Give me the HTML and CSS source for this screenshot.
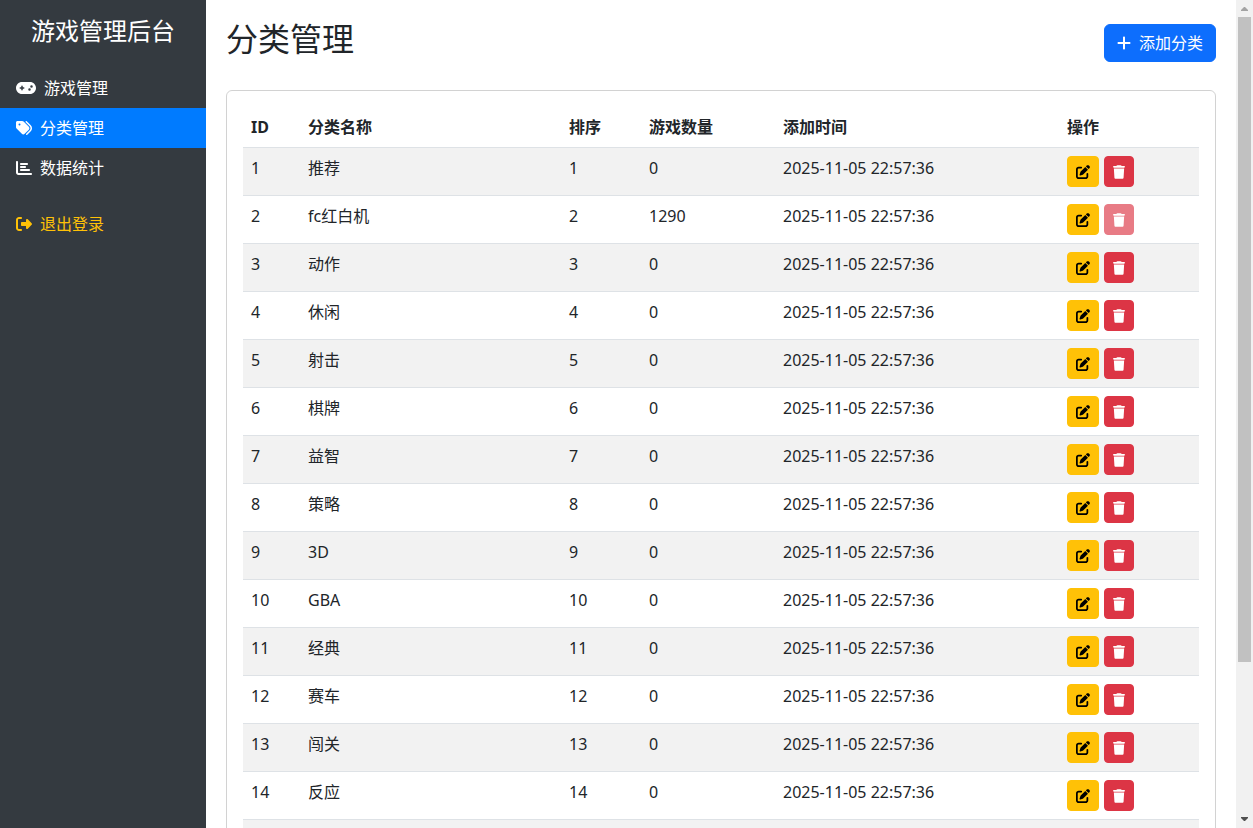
FILE: index.html
```html
<!DOCTYPE html>
<html lang="zh-CN">
<head>
    <meta charset="UTF-8">
    <meta name="viewport" content="width=device-width, initial-scale=1.0">
    <title>分类管理 - 游戏管理后台</title>
    <link rel="stylesheet" href="styles.css">
</head>
<body>
    <svg class="icon-defs" aria-hidden="true">
        <symbol id="icon-gamepad" viewBox="0 0 640 512">
            <path d="M192 64C86 64 0 150 0 256S86 448 192 448H448c106 0 192-86 192-192s-86-192-192-192H192zM496 168a40 40 0 1 1 0 80 40 40 0 1 1 0-80zM392 304a40 40 0 1 1 80 0 40 40 0 1 1 -80 0zM168 200c0-13.3 10.7-24 24-24s24 10.7 24 24v32h32c13.3 0 24 10.7 24 24s-10.7 24-24 24H216v32c0 13.3-10.7 24-24 24s-24-10.7-24-24V280H136c-13.3 0-24-10.7-24-24s10.7-24 24-24h32V200z"/>
        </symbol>
        <symbol id="icon-tags" viewBox="0 0 512 512">
            <path d="M345 39.1L472.8 168.4c52.4 53 52.4 138.2 0 191.2L360.8 472.9c-9.3 9.4-24.5 9.5-33.9 .2s-9.5-24.5-.2-33.9L438.6 325.9c33.9-34.3 33.9-89.4 0-123.7L310.9 72.9c-9.3-9.4-9.2-24.6 .2-33.9s24.6-9.2 33.9 .2zM0 229.5V80C0 53.5 21.5 32 48 32H197.5c17 0 33.3 6.7 45.3 18.7l168 168c25 25 25 65.5 0 90.5L277.3 442.7c-25 25-65.5 25-90.5 0l-168-168C6.7 262.7 0 246.5 0 229.5zM144 144a32 32 0 1 0 -64 0 32 32 0 1 0 64 0z"/>
        </symbol>
        <symbol id="icon-chart" viewBox="0 0 512 512">
            <path d="M32 32c17.7 0 32 14.3 32 32V400c0 8.8 7.2 16 16 16H480c17.7 0 32 14.3 32 32s-14.3 32-32 32H80c-44.2 0-80-35.8-80-80V64C0 46.3 14.3 32 32 32zm96 96c0-17.7 14.3-32 32-32l192 0c17.7 0 32 14.3 32 32s-14.3 32-32 32H160c-17.7 0-32-14.3-32-32zm32 64H288c17.7 0 32 14.3 32 32s-14.3 32-32 32H160c-17.7 0-32-14.3-32-32s14.3-32 32-32zm0 96H416c17.7 0 32 14.3 32 32s-14.3 32-32 32H160c-17.7 0-32-14.3-32-32s14.3-32 32-32z"/>
        </symbol>
        <symbol id="icon-logout" viewBox="0 0 512 512">
            <path d="M377.9 105.9L500.7 228.7c7.2 7.2 11.3 17.1 11.3 27.3s-4.1 20.1-11.3 27.3L377.9 406.1c-6.4 6.4-15 9.9-24 9.9c-18.7 0-33.9-15.2-33.9-33.9l0-62.1-128 0c-17.7 0-32-14.3-32-32l0-64c0-17.7 14.3-32 32-32l128 0 0-62.1c0-18.7 15.2-33.9 33.9-33.9c9 0 17.6 3.6 24 9.9zM160 96L96 96c-17.7 0-32 14.3-32 32l0 256c0 17.7 14.3 32 32 32l64 0c17.7 0 32 14.3 32 32s-14.3 32-32 32l-64 0c-53 0-96-43-96-96L0 128C0 75 43 32 96 32l64 0c17.7 0 32 14.3 32 32s-14.3 32-32 32z"/>
        </symbol>
        <symbol id="icon-plus" viewBox="0 0 448 512">
            <path d="M256 80c0-17.7-14.3-32-32-32s-32 14.3-32 32V224H48c-17.7 0-32 14.3-32 32s14.3 32 32 32H192V432c0 17.7 14.3 32 32 32s32-14.3 32-32V288H400c17.7 0 32-14.3 32-32s-14.3-32-32-32H256V80z"/>
        </symbol>
        <symbol id="icon-edit" viewBox="0 0 512 512">
            <path d="M471.6 21.7c-21.9-21.9-57.3-21.9-79.2 0L362.3 51.7l97.9 97.9 30.1-30.1c21.9-21.9 21.9-57.3 0-79.2L471.6 21.7zm-299.2 220c-6.1 6.1-10.8 13.6-13.5 21.9l-29.6 88.8c-2.9 8.6-.6 18.1 5.8 24.6s15.9 8.7 24.6 5.8l88.8-29.6c8.2-2.7 15.7-7.4 21.9-13.5L437.7 172.3 339.7 74.3 172.4 241.7zM96 64C43 64 0 107 0 160V416c0 53 43 96 96 96H352c53 0 96-43 96-96V320c0-17.7-14.3-32-32-32s-32 14.3-32 32v96c0 17.7-14.3 32-32 32H96c-17.7 0-32-14.3-32-32V160c0-17.7 14.3-32 32-32h96c17.7 0 32-14.3 32-32s-14.3-32-32-32H96z"/>
        </symbol>
        <symbol id="icon-trash" viewBox="0 0 448 512">
            <path d="M135.2 17.7L128 32H32C14.3 32 0 46.3 0 64S14.3 96 32 96H416c17.7 0 32-14.3 32-32s-14.3-32-32-32H320l-7.2-14.3C307.4 6.8 296.3 0 284.2 0H163.8c-12.1 0-23.2 6.8-28.6 17.7zM416 128H32L53.2 467c1.6 25.3 22.6 45 47.9 45H346.9c25.3 0 46.3-19.7 47.9-45L416 128z"/>
        </symbol>
    </svg>

    <div class="layout">
        <aside class="sidebar">
            <h4 class="sidebar-title">游戏管理后台</h4>
            <nav class="nav">
                <a class="nav-link" href="#games"><svg class="icon icon-wide"><use href="#icon-gamepad"/></svg>游戏管理</a>
                <a class="nav-link active" href="#categories"><svg class="icon"><use href="#icon-tags"/></svg>分类管理</a>
                <a class="nav-link" href="#stats"><svg class="icon"><use href="#icon-chart"/></svg>数据统计</a>
                <a class="nav-link logout" href="#logout"><svg class="icon"><use href="#icon-logout"/></svg>退出登录</a>
            </nav>
        </aside>

        <main class="main-content">
            <div class="page-header">
                <h2 class="page-title">分类管理</h2>
                <button type="button" class="btn btn-primary"><svg class="icon icon-plus"><use href="#icon-plus"/></svg>添加分类</button>
            </div>

            <div class="card">
                <table class="table">
                    <colgroup>
                        <col class="col-id">
                        <col>
                        <col class="col-sort">
                        <col class="col-count">
                        <col class="col-time">
                        <col class="col-actions">
                    </colgroup>
                    <thead>
                        <tr>
                            <th>ID</th>
                            <th>分类名称</th>
                            <th>排序</th>
                            <th>游戏数量</th>
                            <th>添加时间</th>
                            <th>操作</th>
                        </tr>
                    </thead>
                    <tbody>
                        <tr>
                            <td>1</td><td>推荐</td><td>1</td><td>0</td><td>2025-11-05 22:57:36</td>
                            <td>
                                <div class="actions">
                                    <button type="button" class="btn-sm btn-warning" aria-label="编辑"><svg class="icon-sm"><use href="#icon-edit"/></svg></button>
                                    <button type="button" class="btn-sm btn-danger" aria-label="删除"><svg class="icon-sm icon-narrow"><use href="#icon-trash"/></svg></button>
                                </div>
                            </td>
                        </tr>
                        <tr>
                            <td>2</td><td>fc红白机</td><td>2</td><td>1290</td><td>2025-11-05 22:57:36</td>
                            <td>
                                <div class="actions">
                                    <button type="button" class="btn-sm btn-warning" aria-label="编辑"><svg class="icon-sm"><use href="#icon-edit"/></svg></button>
                                    <button type="button" class="btn-sm btn-danger" aria-label="删除" disabled><svg class="icon-sm icon-narrow"><use href="#icon-trash"/></svg></button>
                                </div>
                            </td>
                        </tr>
                        <tr>
                            <td>3</td><td>动作</td><td>3</td><td>0</td><td>2025-11-05 22:57:36</td>
                            <td>
                                <div class="actions">
                                    <button type="button" class="btn-sm btn-warning" aria-label="编辑"><svg class="icon-sm"><use href="#icon-edit"/></svg></button>
                                    <button type="button" class="btn-sm btn-danger" aria-label="删除"><svg class="icon-sm icon-narrow"><use href="#icon-trash"/></svg></button>
                                </div>
                            </td>
                        </tr>
                        <tr>
                            <td>4</td><td>休闲</td><td>4</td><td>0</td><td>2025-11-05 22:57:36</td>
                            <td>
                                <div class="actions">
                                    <button type="button" class="btn-sm btn-warning" aria-label="编辑"><svg class="icon-sm"><use href="#icon-edit"/></svg></button>
                                    <button type="button" class="btn-sm btn-danger" aria-label="删除"><svg class="icon-sm icon-narrow"><use href="#icon-trash"/></svg></button>
                                </div>
                            </td>
                        </tr>
                        <tr>
                            <td>5</td><td>射击</td><td>5</td><td>0</td><td>2025-11-05 22:57:36</td>
                            <td>
                                <div class="actions">
                                    <button type="button" class="btn-sm btn-warning" aria-label="编辑"><svg class="icon-sm"><use href="#icon-edit"/></svg></button>
                                    <button type="button" class="btn-sm btn-danger" aria-label="删除"><svg class="icon-sm icon-narrow"><use href="#icon-trash"/></svg></button>
                                </div>
                            </td>
                        </tr>
                        <tr>
                            <td>6</td><td>棋牌</td><td>6</td><td>0</td><td>2025-11-05 22:57:36</td>
                            <td>
                                <div class="actions">
                                    <button type="button" class="btn-sm btn-warning" aria-label="编辑"><svg class="icon-sm"><use href="#icon-edit"/></svg></button>
                                    <button type="button" class="btn-sm btn-danger" aria-label="删除"><svg class="icon-sm icon-narrow"><use href="#icon-trash"/></svg></button>
                                </div>
                            </td>
                        </tr>
                        <tr>
                            <td>7</td><td>益智</td><td>7</td><td>0</td><td>2025-11-05 22:57:36</td>
                            <td>
                                <div class="actions">
                                    <button type="button" class="btn-sm btn-warning" aria-label="编辑"><svg class="icon-sm"><use href="#icon-edit"/></svg></button>
                                    <button type="button" class="btn-sm btn-danger" aria-label="删除"><svg class="icon-sm icon-narrow"><use href="#icon-trash"/></svg></button>
                                </div>
                            </td>
                        </tr>
                        <tr>
                            <td>8</td><td>策略</td><td>8</td><td>0</td><td>2025-11-05 22:57:36</td>
                            <td>
                                <div class="actions">
                                    <button type="button" class="btn-sm btn-warning" aria-label="编辑"><svg class="icon-sm"><use href="#icon-edit"/></svg></button>
                                    <button type="button" class="btn-sm btn-danger" aria-label="删除"><svg class="icon-sm icon-narrow"><use href="#icon-trash"/></svg></button>
                                </div>
                            </td>
                        </tr>
                        <tr>
                            <td>9</td><td>3D</td><td>9</td><td>0</td><td>2025-11-05 22:57:36</td>
                            <td>
                                <div class="actions">
                                    <button type="button" class="btn-sm btn-warning" aria-label="编辑"><svg class="icon-sm"><use href="#icon-edit"/></svg></button>
                                    <button type="button" class="btn-sm btn-danger" aria-label="删除"><svg class="icon-sm icon-narrow"><use href="#icon-trash"/></svg></button>
                                </div>
                            </td>
                        </tr>
                        <tr>
                            <td>10</td><td>GBA</td><td>10</td><td>0</td><td>2025-11-05 22:57:36</td>
                            <td>
                                <div class="actions">
                                    <button type="button" class="btn-sm btn-warning" aria-label="编辑"><svg class="icon-sm"><use href="#icon-edit"/></svg></button>
                                    <button type="button" class="btn-sm btn-danger" aria-label="删除"><svg class="icon-sm icon-narrow"><use href="#icon-trash"/></svg></button>
                                </div>
                            </td>
                        </tr>
                        <tr>
                            <td>11</td><td>经典</td><td>11</td><td>0</td><td>2025-11-05 22:57:36</td>
                            <td>
                                <div class="actions">
                                    <button type="button" class="btn-sm btn-warning" aria-label="编辑"><svg class="icon-sm"><use href="#icon-edit"/></svg></button>
                                    <button type="button" class="btn-sm btn-danger" aria-label="删除"><svg class="icon-sm icon-narrow"><use href="#icon-trash"/></svg></button>
                                </div>
                            </td>
                        </tr>
                        <tr>
                            <td>12</td><td>赛车</td><td>12</td><td>0</td><td>2025-11-05 22:57:36</td>
                            <td>
                                <div class="actions">
                                    <button type="button" class="btn-sm btn-warning" aria-label="编辑"><svg class="icon-sm"><use href="#icon-edit"/></svg></button>
                                    <button type="button" class="btn-sm btn-danger" aria-label="删除"><svg class="icon-sm icon-narrow"><use href="#icon-trash"/></svg></button>
                                </div>
                            </td>
                        </tr>
                        <tr>
                            <td>13</td><td>闯关</td><td>13</td><td>0</td><td>2025-11-05 22:57:36</td>
                            <td>
                                <div class="actions">
                                    <button type="button" class="btn-sm btn-warning" aria-label="编辑"><svg class="icon-sm"><use href="#icon-edit"/></svg></button>
                                    <button type="button" class="btn-sm btn-danger" aria-label="删除"><svg class="icon-sm icon-narrow"><use href="#icon-trash"/></svg></button>
                                </div>
                            </td>
                        </tr>
                        <tr>
                            <td>14</td><td>反应</td><td>14</td><td>0</td><td>2025-11-05 22:57:36</td>
                            <td>
                                <div class="actions">
                                    <button type="button" class="btn-sm btn-warning" aria-label="编辑"><svg class="icon-sm"><use href="#icon-edit"/></svg></button>
                                    <button type="button" class="btn-sm btn-danger" aria-label="删除"><svg class="icon-sm icon-narrow"><use href="#icon-trash"/></svg></button>
                                </div>
                            </td>
                        </tr>
                        <tr class="row-empty">
                            <td colspan="6"></td>
                        </tr>
                    </tbody>
                </table>
            </div>
        </main>

        <div class="scrollbar" aria-hidden="true">
            <svg class="scroll-arrow arrow-up" viewBox="0 0 17 17"><path d="M5 11h7v-1L9 7H8L5 10z"/></svg>
            <div class="scroll-track">
                <div class="scroll-thumb"></div>
            </div>
            <svg class="scroll-arrow arrow-down" viewBox="0 0 17 17"><path d="M5 6h7v1L9 10H8L5 7z"/></svg>
        </div>
    </div>
</body>
</html>
```

FILE: styles.css
```css
* {
    margin: 0;
    padding: 0;
    box-sizing: border-box;
}

body {
    font-family: 'Noto Sans', 'Noto Sans CJK SC', sans-serif;
    font-size: 16px;
    line-height: 24px;
    color: #212529;
    background-color: #fff;
}

button {
    font: inherit;
    cursor: pointer;
}

.icon-defs {
    display: none;
}

.icon,
.icon-sm {
    flex-shrink: 0;
    fill: currentColor;
}

.icon {
    width: 16px;
    height: 16px;
}

.icon-wide {
    width: 20px;
}

.icon-plus {
    width: 14px;
}

.icon-sm {
    width: 14px;
    height: 14px;
}

.icon-narrow {
    width: 12px;
}

.layout {
    display: grid;
    grid-template-columns: minmax(0, 1fr) minmax(0, 5fr) 17px;
    height: 100vh;
}

/* Sidebar */
.sidebar {
    background-color: #343a40;
    color: #fff;
}

.sidebar-title {
    padding: 16px 0 22px;
    font-size: 24px;
    font-weight: 400;
    line-height: 30px;
    text-align: center;
}

.nav-link {
    display: flex;
    align-items: center;
    gap: 8px;
    padding: 8px 16px;
    color: #fff;
    text-decoration: none;
}

.nav-link.active {
    background-color: #007bff;
}

.nav-link.logout {
    margin-top: 16px;
    color: #ffc107;
}

/* Content */
.main-content {
    min-height: 0;
    padding: 20px;
    overflow-y: auto;
    scrollbar-width: none;
}

.page-header {
    display: flex;
    align-items: center;
    justify-content: space-between;
    margin-bottom: 24px;
}

.page-title {
    margin-bottom: 8px;
    font-size: 32px;
    font-weight: 400;
    line-height: 38px;
}

.btn {
    display: flex;
    align-items: center;
    gap: 8px;
    padding: 6px 12px;
    border: 1px solid transparent;
    border-radius: 6px;
}

.btn-primary {
    background-color: #0d6efd;
    border-color: #0d6efd;
    color: #fff;
}

.card {
    padding: 16px;
    border: 1px solid rgba(0, 0, 0, 0.175);
    border-radius: 6px;
}

.table {
    width: 100%;
    margin-bottom: 16px;
    table-layout: fixed;
    border-collapse: separate;
    border-spacing: 0;
}

.col-id {
    width: 57px;
}

.col-sort {
    width: 80px;
}

.col-count {
    width: 134px;
}

.col-time {
    width: 284px;
}

.col-actions {
    width: 140px;
}

.table th,
.table td {
    padding: 8px;
    border-bottom: 1px solid #dee2e6;
    text-align: left;
    vertical-align: top;
}

.table tbody tr:nth-child(odd) {
    background-color: #f2f2f2;
}

.row-empty {
    height: 48px;
}

.actions {
    display: flex;
    gap: 5px;
}

.btn-sm {
    display: flex;
    align-items: center;
    height: 31px;
    padding: 0 8px;
    border: 1px solid transparent;
    border-radius: 4px;
}

.btn-warning {
    background-color: #ffc107;
    border-color: #ffc107;
    color: #000;
}

.btn-danger {
    background-color: #dc3545;
    border-color: #dc3545;
    color: #fff;
}

.btn-sm:disabled {
    opacity: 0.65;
    cursor: default;
}

/* Scrollbar */
.scrollbar {
    display: flex;
    flex-direction: column;
    background-color: #f1f1f1;
}

.scroll-arrow {
    width: 17px;
    height: 17px;
}

.arrow-up {
    fill: #a3a3a3;
}

.arrow-down {
    fill: #505050;
}

.scroll-track {
    display: grid;
    flex: 1;
    grid-template-rows: 13fr 3fr;
    padding: 0 2px;
}

.scroll-thumb {
    background-color: #c1c1c1;
}
```
